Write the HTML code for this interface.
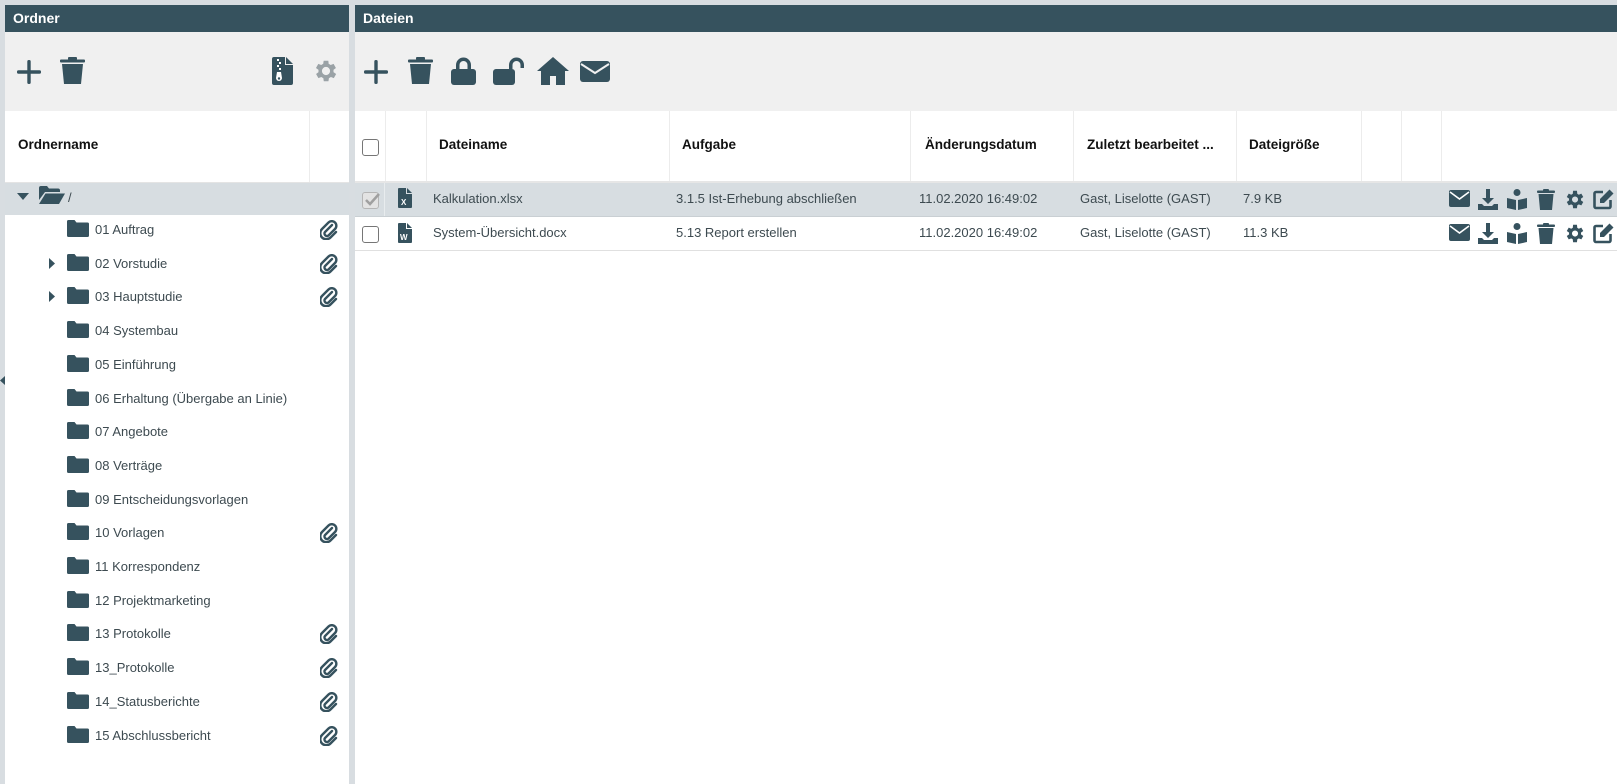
<!DOCTYPE html>
<html><head><meta charset="utf-8"><style>
*{margin:0;padding:0;box-sizing:border-box}
body{width:1617px;height:784px;background:#d8dde1;font-family:"Liberation Sans",sans-serif;position:relative;overflow:hidden}
.a{position:absolute}
.hd{background:#36525e;color:#fff;font-size:14px;font-weight:bold;height:27px;line-height:27px;padding-left:8px}
.tb{background:#f0f0f0}
.th{font-size:13.5px;font-weight:bold;color:#111}
.t{font-size:13px;color:#3d4a50;white-space:nowrap}
.vl{position:absolute;width:1px;background:#ececec}
svg{position:absolute;fill:#36525e}
.cb{position:absolute;width:17px;height:17px;border:1.5px solid #767676;border-radius:3px;background:#fff}
</style></head><body>

<!-- LEFT PANEL -->
<div class="a" style="left:5px;top:5px;width:344px;height:779px;background:#fff"></div>
<div class="a hd" style="left:5px;top:5px;width:344px">Ordner</div>
<div class="a tb" style="left:5px;top:32px;width:344px;height:79px"></div>
<svg style="left:17px;top:60px" width="24" height="24" viewBox="0 0 24 24"><rect x="10.3" y="0" width="3.4" height="24" rx="1.5"/><rect x="0" y="10.3" width="24" height="3.4" rx="1.5"/></svg>
<svg style="left:60px;top:57px" width="25" height="28" viewBox="0 0 25 28"><rect x="0" y="2.5" width="25" height="3" rx="1"/><rect x="8" y="0" width="9" height="3" rx="1"/><path d="M2 7h21l-2 20H4z"/></svg>
<svg style="left:272px;top:57px" width="21" height="28" viewBox="0 0 21 28"><path d="M0 2a2 2 0 0 1 2-2h11v8h8v18a2 2 0 0 1-2 2H2a2 2 0 0 1-2-2z"/><path d="M14 0l7 7h-7z"/><g fill="#fff"><rect x="5" y="2" width="2" height="2"/><rect x="7" y="5" width="2" height="2"/><rect x="5" y="8" width="2" height="2"/><rect x="7" y="11" width="2" height="2"/><path d="M5 15h4l1 6a2.5 2.5 0 1 1-6 0z"/></g><circle cx="7" cy="21.5" r="1.2"/></svg>
<svg style="left:312px;top:57px;fill:#9aa2a6" width="28" height="28" viewBox="0 0 24 24"><path d="M19.4 13a7.5 7.5 0 0 0 0-2l2.1-1.6-2-3.5-2.5 1a7.5 7.5 0 0 0-1.7-1L15 3.2h-4l-.4 2.7a7.5 7.5 0 0 0-1.7 1l-2.5-1-2 3.5L6.6 11a7.5 7.5 0 0 0 0 2l-2.1 1.6 2 3.5 2.5-1a7.5 7.5 0 0 0 1.7 1l.4 2.7h4l.4-2.7a7.5 7.5 0 0 0 1.7-1l2.5 1 2-3.5zM13 15.5a3.5 3.5 0 1 1 0-7 3.5 3.5 0 0 1 0 7z" transform="translate(-1 0)"/></svg>
<div class="vl" style="left:309px;top:111px;height:71px"></div>
<div class="a th" style="left:18px;top:137px">Ordnername</div>
<div class="a" style="left:5px;top:182px;width:344px;height:1px;background:#e4e4e4"></div>
<div class="a" style="left:5px;top:183px;width:344px;height:32px;background:#d7dde1"></div>
<svg style="left:17px;top:193px" width="12" height="8" viewBox="0 0 12 8"><path d="M0 0h12L6 7z"/></svg>
<svg style="left:39px;top:186px" width="26" height="18" viewBox="0 0 26 18"><path d="M0 2a2 2 0 0 1 2-2h6l2 2.5h9a2 2 0 0 1 2 2V6H6L0 14z"/><path d="M6.5 7.5H26l-6 10.5H0z"/></svg>
<div class="a t" style="left:68px;top:190px">/</div>

<div id="tree"></div>

<!-- RIGHT PANEL -->
<div class="a" style="left:355px;top:5px;width:1262px;height:779px;background:#fff"></div>
<div class="a hd" style="left:355px;top:5px;width:1262px">Dateien</div>
<div class="a tb" style="left:355px;top:32px;width:1262px;height:79px"></div>
<svg style="left:364px;top:60px" width="24" height="24" viewBox="0 0 24 24"><rect x="10.3" y="0" width="3.4" height="24" rx="1.5"/><rect x="0" y="10.3" width="24" height="3.4" rx="1.5"/></svg>
<svg style="left:408px;top:57px" width="25" height="28" viewBox="0 0 25 28"><rect x="0" y="2.5" width="25" height="3" rx="1"/><rect x="8" y="0" width="9" height="3" rx="1"/><path d="M2 7h21l-2 20H4z"/></svg>
<svg style="left:451px;top:57px" width="25" height="28" viewBox="0 0 25 28"><path d="M5 12V8a7.5 7.5 0 0 1 15 0v4h-3.5V8a4 4 0 0 0-8 0v4z"/><rect x="0" y="12" width="25" height="16" rx="3"/></svg>
<svg style="left:493px;top:57px" width="32" height="28" viewBox="0 0 32 28"><path d="M16 12V8a7.5 7.5 0 0 1 15 0v3h-3.5V8a4 4 0 0 0-8 0v4z"/><rect x="0" y="12" width="22" height="16" rx="3"/></svg>
<svg style="left:537px;top:57px" width="32" height="28" viewBox="0 0 32 28"><path d="M16 0L0 14h4v14h9v-9h6v9h9V14h4z"/></svg>
<svg style="left:580px;top:61px" width="30" height="21" viewBox="0 0 30 21"><rect x="0" y="0" width="30" height="21" rx="3"/><path d="M1 3l14 9 14-9" fill="none" stroke="#f0f0f0" stroke-width="2"/></svg>

<!-- header row -->
<div class="vl" style="left:385px;top:111px;height:71px"></div>
<div class="vl" style="left:426px;top:111px;height:71px"></div>
<div class="vl" style="left:669px;top:111px;height:71px"></div>
<div class="vl" style="left:910px;top:111px;height:71px"></div>
<div class="vl" style="left:1073px;top:111px;height:71px"></div>
<div class="vl" style="left:1236px;top:111px;height:71px"></div>
<div class="vl" style="left:1361px;top:111px;height:71px"></div>
<div class="vl" style="left:1401px;top:111px;height:71px"></div>
<div class="vl" style="left:1441px;top:111px;height:71px"></div>
<div class="cb" style="left:362px;top:139px"></div>
<div class="a th" style="left:439px;top:137px">Dateiname</div>
<div class="a th" style="left:682px;top:137px">Aufgabe</div>
<div class="a th" style="left:925px;top:137px">Änderungsdatum</div>
<div class="a th" style="left:1087px;top:137px">Zuletzt bearbeitet ...</div>
<div class="a th" style="left:1249px;top:137px">Dateigröße</div>
<div class="a" style="left:355px;top:181px;width:1262px;height:2px;background:#e6e6e6"></div>

<!-- row 1 -->
<div class="a" style="left:355px;top:183px;width:1262px;height:34px;background:#d7dde1"></div>
<div class="a" style="left:384px;top:183px;width:1px;height:34px;background:#e8ecee"></div>
<div class="cb" style="left:362px;top:192px;border-color:#b5b5b5;background:#e3e3e3"></div>
<svg style="left:364px;top:193px;fill:none;stroke:#a0a0a0;stroke-width:2.5" width="16" height="14" viewBox="0 0 16 14"><path d="M2 7l4 4 9-10"/></svg>
<svg style="left:398px;top:188px" width="14" height="20" viewBox="0 0 14 20"><path d="M0 1a1 1 0 0 1 1-1h7v6h6v13a1 1 0 0 1-1 1H1a1 1 0 0 1-1-1z"/><path d="M9 0l5 5H9z"/><text x="3" y="17" font-size="8" font-weight="bold" fill="#fff" font-family="Liberation Sans">X</text></svg>
<div class="a t" style="left:433px;top:191px">Kalkulation.xlsx</div>
<div class="a t" style="left:676px;top:191px">3.1.5 Ist-Erhebung abschließen</div>
<div class="a t" style="left:919px;top:191px">11.02.2020 16:49:02</div>
<div class="a t" style="left:1080px;top:191px">Gast, Liselotte (GAST)</div>
<div class="a t" style="left:1243px;top:191px">7.9 KB</div>
<div class="a" style="left:355px;top:216px;width:1262px;height:1px;background:#c9cfd3"></div>

<!-- row 2 -->
<div class="cb" style="left:362px;top:226px"></div>
<svg style="left:398px;top:223px" width="14" height="20" viewBox="0 0 14 20"><path d="M0 1a1 1 0 0 1 1-1h7v6h6v13a1 1 0 0 1-1 1H1a1 1 0 0 1-1-1z"/><path d="M9 0l5 5H9z"/><text x="2" y="17" font-size="8" font-weight="bold" fill="#fff" font-family="Liberation Sans">W</text></svg>
<div class="a t" style="left:433px;top:225px">System-Übersicht.docx</div>
<div class="a t" style="left:676px;top:225px">5.13 Report erstellen</div>
<div class="a t" style="left:919px;top:225px">11.02.2020 16:49:02</div>
<div class="a t" style="left:1080px;top:225px">Gast, Liselotte (GAST)</div>
<div class="a t" style="left:1243px;top:225px">11.3 KB</div>
<div class="a" style="left:355px;top:250px;width:1262px;height:1px;background:#e0e0e0"></div>

<div id="acts"></div>

<!-- collapse arrow -->
<svg style="left:0;top:376px" width="5" height="9" viewBox="0 0 5 9"><path d="M5 0v9L0 4.5z"/></svg>

<script>
var names=["01 Auftrag","02 Vorstudie","03 Hauptstudie","04 Systembau","05 Einführung","06 Erhaltung (Übergabe an Linie)","07 Angebote","08 Verträge","09 Entscheidungsvorlagen","10 Vorlagen","11 Korrespondenz","12 Projektmarketing","13 Protokolle","13_Protokolle","14_Statusberichte","15 Abschlussbericht"];
var clip=[1,1,1,0,0,0,0,0,0,1,0,0,1,1,1,1];
var h="";
names.forEach(function(n,i){
 var y=230+i*33.7;
 h+='<svg style="left:67px;top:'+(y-10)+'px" width="22" height="17" viewBox="0 0 22 17"><path d="M0 1.5A1.5 1.5 0 0 1 1.5 0h6l2 2.5h11A1.5 1.5 0 0 1 22 4v11.5a1.5 1.5 0 0 1-1.5 1.5h-19A1.5 1.5 0 0 1 0 15.5z"/></svg>';
 h+='<div class="a t" style="left:95px;top:'+(y-8)+'px">'+n+'</div>';
 if(i==1||i==2) h+='<svg style="left:49px;top:'+(y-6)+'px" width="6" height="11" viewBox="0 0 6 11"><path d="M0 0l6 5.5L0 11z"/></svg>';
 if(clip[i]) h+='<svg style="left:320px;top:'+(y-10)+'px;fill:none;stroke:#36525e;stroke-width:2.4;stroke-linecap:round" width="18" height="20" viewBox="0 0 18 20"><path d="M12 5L5 12a2.5 2.5 0 0 0 3.5 3.5L15 9a4.5 4.5 0 0 0-6.5-6.5L2 9a6 6 0 0 0 8.5 8.5L16 12"/></svg>';
});
document.getElementById("tree").outerHTML=h;
var a="";
[199,233].forEach(function(c){
 var t=c-10;
 a+='<svg style="left:1449px;top:'+(t+1)+'px" width="21" height="17" viewBox="0 0 21 17"><rect width="21" height="17" rx="2"/><path d="M1 2l9.5 7L20 2" fill="none" stroke="#fff" stroke-width="1.6"/></svg>';
 a+='<svg style="left:1478px;top:'+t+'px" width="20" height="21" viewBox="0 0 20 21"><path d="M8 0h4v9h4l-6 6-6-6h4z"/><path d="M0 15h4l2 2h8l2-2h4v6H0z"/></svg>';
 a+='<svg style="left:1507px;top:'+t+'px" width="20" height="21" viewBox="0 0 20 21"><circle cx="10" cy="3.5" r="3.5"/><path d="M0 9l9 2v10L0 19zM20 9l-9 2v10l9-2z"/></svg>';
 a+='<svg style="left:1537px;top:'+t+'px" width="18" height="21" viewBox="0 0 18 21"><rect y="1.5" width="18" height="2.5" rx="1"/><rect x="6" width="6" height="2.5" rx="1"/><path d="M1.5 5h15l-1.5 16H3z"/></svg>';
 a+='<svg style="left:1564px;top:'+t+'px" width="21" height="21" viewBox="0 0 24 24"><path d="M19.4 13a7.5 7.5 0 0 0 0-2l2.6-1.8-2.2-3.9-2.9 1.2a7.5 7.5 0 0 0-1.7-1L14.8 2h-4.4l-.4 3.5a7.5 7.5 0 0 0-1.7 1L5.4 5.3 3.2 9.2 5.8 11a7.5 7.5 0 0 0 0 2l-2.6 1.8 2.2 3.9 2.9-1.2a7.5 7.5 0 0 0 1.7 1l.4 3.5h4.4l.4-3.5a7.5 7.5 0 0 0 1.7-1l2.9 1.2 2.2-3.9zM12.6 15.5a3.5 3.5 0 1 1 0-7 3.5 3.5 0 0 1 0 7z"/></svg>';
 a+='<svg style="left:1593px;top:'+t+'px" width="21" height="21" viewBox="0 0 21 21"><path d="M10 3H3a1.5 1.5 0 0 0-1.5 1.5v13A1.5 1.5 0 0 0 3 19h13a1.5 1.5 0 0 0 1.5-1.5V11" fill="none" stroke="#36525e" stroke-width="2.6"/><path d="M16.5 0.5L20.5 4.5 11 14H7v-4z"/></svg>';
});
document.getElementById("acts").outerHTML=a;
</script>
</body></html>
